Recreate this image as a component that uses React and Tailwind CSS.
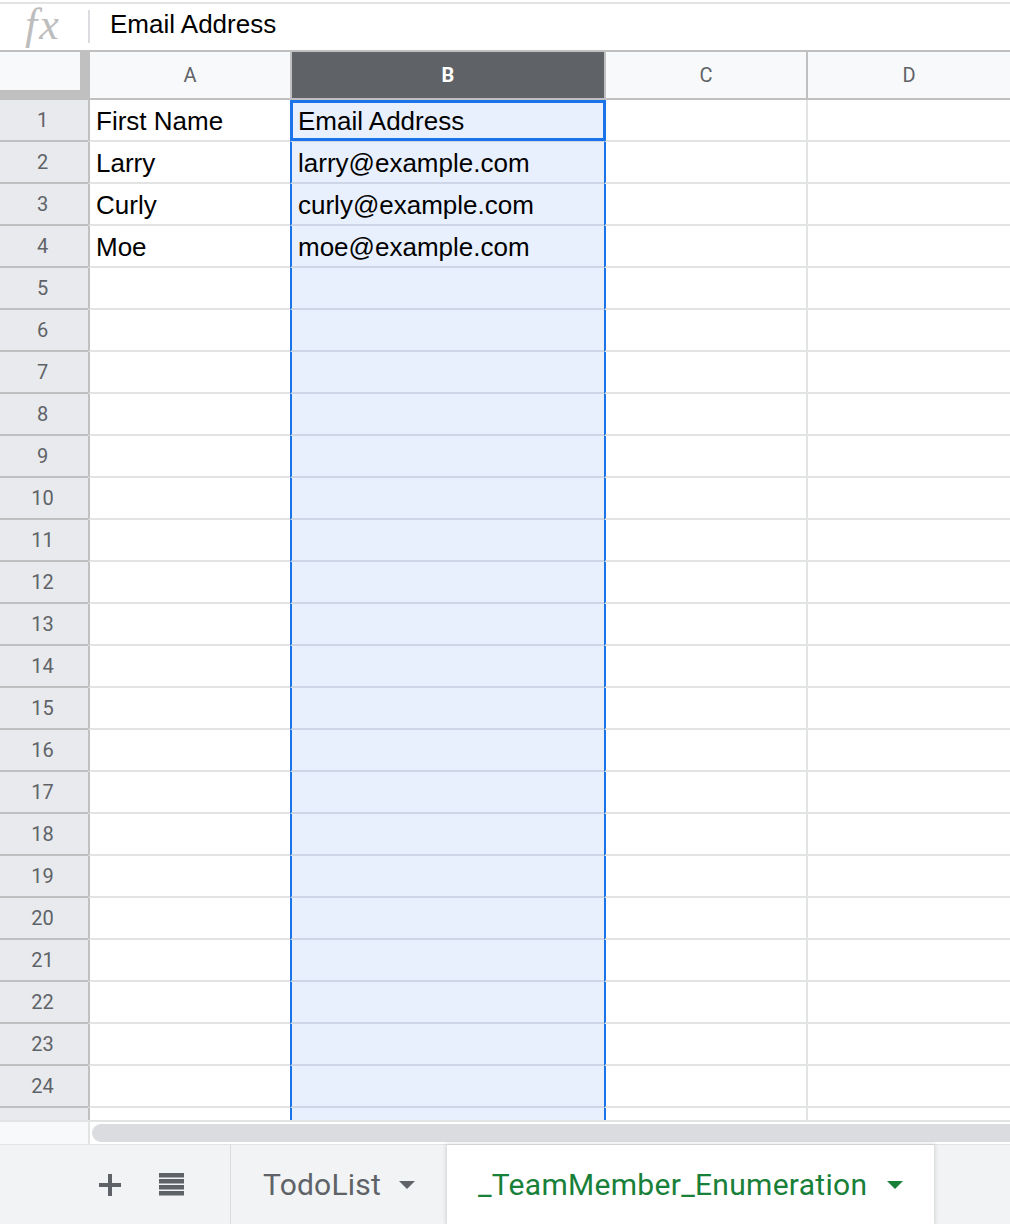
import React from "react";

// rows of the sheet, only the first four hold data
const data = [
  ["First Name", "Email Address"],
  ["Larry", "larry@example.com"],
  ["Curly", "curly@example.com"],
  ["Moe", "moe@example.com"],
];

const cellFont = { fontFamily: '"Liberation Sans", Arial, sans-serif' };
const uiFont = { fontFamily: "Roboto, Arial, sans-serif" };

function Row({ n, label }) {
  const vals = data[n - 1] || ["", ""];
  return (
    <div className="flex h-[42px]">
      <div
        className="w-[88px] shrink-0 h-full border-b-2 border-[#c0c0c0] bg-[#e8eaed] flex items-center justify-center pr-[3px] text-[20px] text-[#5f6368]"
        style={uiFont}
      >
        {label ? n : ""}
      </div>
      <div className="w-[202px] shrink-0 h-full border-l-2 border-l-[#c0c0c0] border-b-2 border-b-[#e2e3e3] flex items-end pl-[6px] pb-[4px] text-[26px] leading-[30px] text-black">
        {vals[0]}
      </div>
      <div className="w-[314px] shrink-0 h-full border-l-2 border-l-[#1a73e8] border-b-2 border-b-[#cdd5e6] bg-[#e8f0fe] flex items-end pl-[6px] pb-[4px] text-[26px] leading-[30px] text-black">
        {vals[1]}
      </div>
      <div className="w-[202px] shrink-0 h-full border-l-2 border-l-[#1a73e8] border-b-2 border-b-[#e2e3e3]" />
      <div className="flex-1 h-full border-l-2 border-l-[#e2e3e3] border-b-2 border-b-[#e2e3e3]" />
    </div>
  );
}

function Caret({ color }) {
  return (
    <svg width="16" height="8" viewBox="0 0 16 8">
      <polygon points="0,0 16,0 8,8" fill={color} />
    </svg>
  );
}

export default function App() {
  const rows = Array.from({ length: 25 }, (_, i) => i + 1);
  return (
    <div className="w-[1010px] h-[1224px] overflow-hidden bg-white flex flex-col" style={cellFont}>
      {/* formula bar */}
      <div className="h-[50px] pt-[2px] shrink-0">
        <div className="h-full border-t-2 border-[#e3e3e3] flex items-center">
          <div className="w-[88px] flex justify-center pb-[4px] pr-[2px]">
            <span
              className="italic text-[44px] leading-none text-[#bdbdbd] tracking-[2px]"
              style={{ fontFamily: '"Liberation Serif", "Times New Roman", serif' }}
            >
              fx
            </span>
          </div>
          <div className="w-[2px] h-[33px] bg-[#dadce0] self-start mt-[6px]" />
          <div className="pl-[20px] pb-[6px] text-[26px] leading-[30px] text-black">Email Address</div>
        </div>
      </div>

      {/* column headers */}
      <div className="flex h-[50px] shrink-0 border-t-2 border-b-2 border-[#c0c0c0] text-[20px]" style={uiFont}>
        <div className="w-[88px] shrink-0 bg-[#c0c0c0]">
          <div className="w-[80px] h-[38px] bg-[#f8f9fa]" />
        </div>
        <div className="w-[202px] shrink-0 border-l-2 border-[#c0c0c0] bg-[#f8f9fa] flex items-center justify-center text-[#5f6368]">
          A
        </div>
        <div className="w-[314px] shrink-0 border-l-2 border-[#c0c0c0] bg-[#5f6368] flex items-center justify-center text-white font-bold">
          B
        </div>
        <div className="w-[202px] shrink-0 border-l-2 border-[#c0c0c0] bg-[#f8f9fa] flex items-center justify-center text-[#5f6368]">
          C
        </div>
        <div className="flex-1 border-l-2 border-[#c0c0c0] bg-[#f8f9fa] flex items-center justify-center text-[#5f6368]">
          D
        </div>
      </div>

      {/* grid body */}
      <div className="relative h-[1020px] shrink-0 overflow-hidden">
        {rows.map((n) => (
          <Row key={n} n={n} label={n < 25} />
        ))}
        <div className="absolute top-0 left-[290px] w-[316px] h-[41px] border-[3px] border-[#1a73e8]" />
      </div>

      {/* horizontal scroll */}
      <div className="flex h-[24px] shrink-0 border-t-2 border-[#e2e3e3]">
        <div className="w-[90px] shrink-0 bg-[#f8f9fa] border-r-2 border-[#e2e3e3]" />
        <div className="flex-1 pl-[2px] pt-[2px] overflow-hidden">
          <div className="h-[18px] w-[calc(100%+30px)] rounded-full bg-[#dadce0]" />
        </div>
      </div>

      {/* sheet tabs */}
      <div className="flex flex-1 bg-[#f1f3f4] border-t border-[#e3e3e3]" style={uiFont}>
        <div className="w-[230px] shrink-0 flex items-center">
          <svg className="ml-[99px]" width="22" height="22" viewBox="0 0 22 22">
            <rect x="0" y="9" width="22" height="4" fill="#5f6368" />
            <rect x="9" y="0" width="4" height="22" fill="#5f6368" />
          </svg>
          <svg className="ml-[38px]" width="25" height="23" viewBox="0 0 25 23">
            <rect x="0" y="0" width="25" height="4.5" fill="#5f6368" />
            <rect x="0" y="6" width="25" height="4.5" fill="#5f6368" />
            <rect x="0" y="12" width="25" height="4.5" fill="#5f6368" />
            <rect x="0" y="18" width="25" height="4.5" fill="#5f6368" />
          </svg>
        </div>
        <div className="w-[217px] shrink-0 border-l border-[#dadce0] flex items-center pl-[32px] gap-[18px]">
          <span className="text-[30px] leading-[36px] tracking-[0.2px] text-[#5f6368]">TodoList</span>
          <Caret color="#5f6368" />
        </div>
        <div className="w-[487px] shrink-0 bg-white flex items-center pl-[31px] gap-[20px] shadow-[0_0_4px_1px_rgba(60,64,67,0.18)]">
          <span className="text-[30px] leading-[36px] tracking-[0.3px] text-[#188038]">_TeamMember_Enumeration</span>
          <Caret color="#188038" />
        </div>
        <div className="flex-1" />
      </div>
    </div>
  );
}
